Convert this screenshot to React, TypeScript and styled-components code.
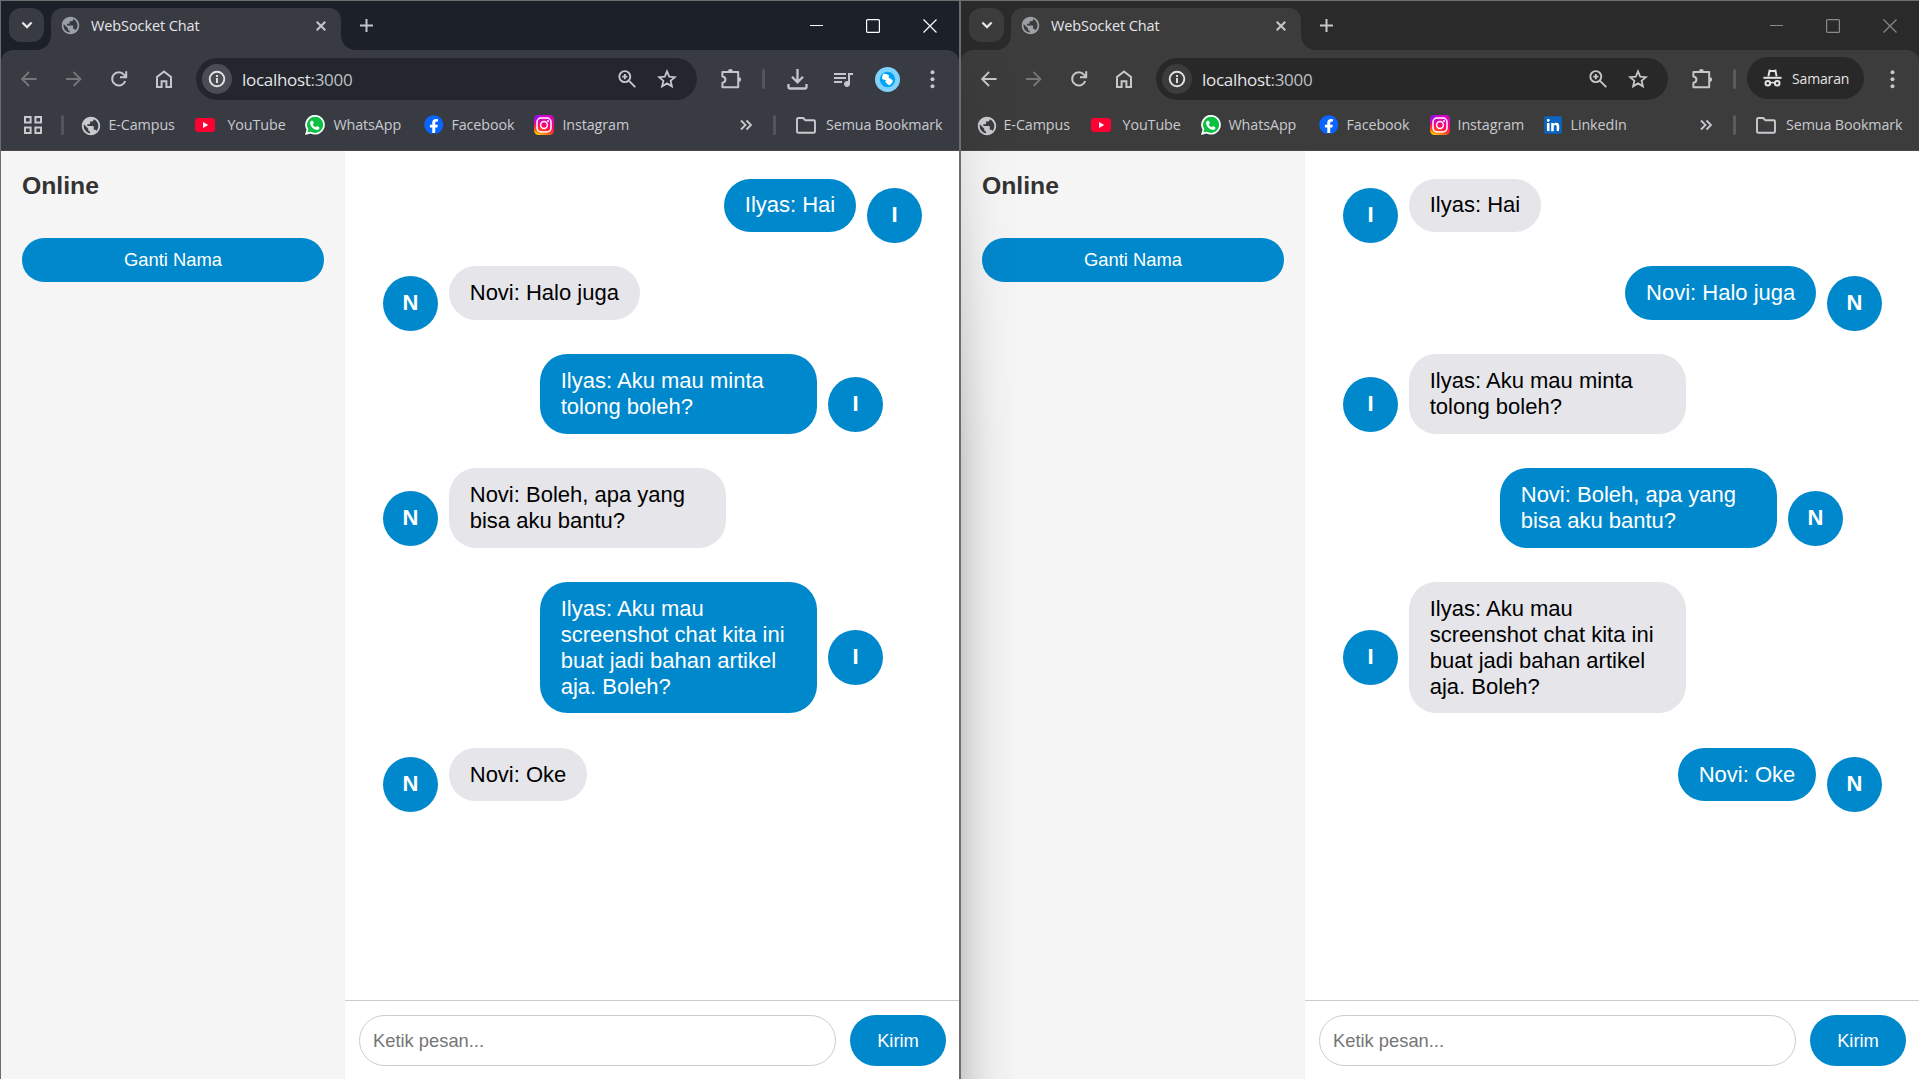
import React from "react";
import styled, { createGlobalStyle, ThemeProvider } from "styled-components";
import { FaFacebook, FaLinkedin } from "react-icons/fa";
import { MdPublic, MdQueueMusic } from "react-icons/md";

const UI = `"Open Sans", "Noto Sans", sans-serif`;
const PAGE = `"Liberation Sans", Arial, sans-serif`;

const normal = {
  strip: "#1c2028",
  bar: "#393b43",
  omni: "#23262d",
  chip: "#4b4d55",
  pill: "#23262d",
  icon: "#c5c6cd",
  dim: "#76777d",
  sep: "#53555e",
  caption: "#ffffff",
  line: "#4a4549",
};
const incognito = {
  strip: "#2a2a2a",
  bar: "#3c3c3c",
  omni: "#282828",
  chip: "#3c3c3c",
  pill: "#282828",
  icon: "#c7c7c7",
  dim: "#777777",
  sep: "#5c5c5c",
  caption: "#8a8a8a",
  line: "#484848",
};
type Chrome = typeof normal;

const Global = createGlobalStyle`
  * { box-sizing: border-box; }
  html, body { margin: 0; background: #fff; overflow: hidden; }
  svg { display: block; flex: none; }
`;

const Desktop = styled.div`
  display: grid;
  grid-template-columns: 960px 959px;
  height: 1079px;
  overflow: hidden;
`;

const Window = styled.div<{ $c: Chrome; $right?: boolean }>`
  position: relative;
  display: flex;
  flex-direction: column;
  min-width: 0;
  height: 1079px;
  border-top: 1px solid #6d6f6e;
  border-left: 1px solid #6d6d6d;
  border-right: ${(p) => (p.$right ? "1px solid #6d6d6d" : "none")};
  background: ${(p) => p.$c.strip};
  color: ${(p) => p.$c.icon};
  font-family: ${UI};
`;

/* Soft shadow cast by the focused window on its neighbour */
const CastShadow = styled.div`
  position: absolute;
  inset: 0 auto 0 0;
  width: 64px;
  pointer-events: none;
  background: linear-gradient(
    to right,
    rgba(0, 0, 0, 0.17),
    rgba(0, 0, 0, 0.1) 12px,
    rgba(0, 0, 0, 0.05) 24px,
    rgba(0, 0, 0, 0.018) 38px,
    transparent 60px
  );
  mask-image: linear-gradient(to bottom, transparent, rgba(0, 0, 0, 0.35) 150px, #000 460px);
`;

const TabStrip = styled.div`
  display: flex;
  flex: none;
  height: 49px;
  padding: 7px 0 0 8px;
`;

const TabSearch = styled.div`
  display: grid;
  place-items: center;
  width: 35px;
  height: 34px;
  border-radius: 12px;
  background: ${(p) => (p.theme as Chrome).bar};
  color: #e6e6ea;
`;

const Tab = styled.div`
  position: relative;
  display: flex;
  align-items: center;
  width: 290px;
  height: 42px;
  margin-left: 7px;
  padding: 0 15px 7px 9px;
  border-radius: 12px 12px 0 0;
  background: ${(p) => (p.theme as Chrome).bar};
  &::before,
  &::after {
    content: "";
    position: absolute;
    bottom: 0;
    width: 14px;
    height: 14px;
  }
  &::before {
    left: -14px;
    background: radial-gradient(circle at 0 0, transparent 13.5px, ${(p) => (p.theme as Chrome).bar} 14px);
  }
  &::after {
    right: -14px;
    background: radial-gradient(circle at 100% 0, transparent 13.5px, ${(p) => (p.theme as Chrome).bar} 14px);
  }
`;

const TabTitle = styled.span`
  flex: 1;
  margin-left: 10px;
  color: #e5e6ea;
  font-size: 14.5px;
  line-height: 20px;
  letter-spacing: -0.1px;
`;

const NewTab = styled.div`
  display: grid;
  place-items: center;
  width: 35px;
  height: 34px;
  margin-left: 8px;
`;

const Captions = styled.div`
  display: flex;
  margin-left: auto;
  margin-top: -7px;
  color: ${(p) => (p.theme as Chrome).caption};
`;

const CaptionButton = styled.div<{ $w: number }>`
  display: grid;
  place-items: center;
  width: ${(p) => p.$w}px;
  height: 49px;
`;

const Bars = styled.div`
  flex: none;
  height: 101px;
  border-radius: 12px 12px 0 0;
  background: ${(p) => (p.theme as Chrome).bar};
  border-bottom: 1px solid ${(p) => (p.theme as Chrome).line};
`;

const Toolbar = styled.div`
  display: flex;
  align-items: center;
  height: 58px;
  padding: 0 4px 0 5px;
`;

const Slot = styled.div<{ $dim?: boolean }>`
  display: grid;
  place-items: center;
  flex: none;
  width: 45px;
  height: 42px;
  color: ${(p) => (p.$dim ? (p.theme as Chrome).dim : "inherit")};
`;

const Omnibox = styled.div`
  display: flex;
  flex: 1;
  align-items: center;
  height: 42px;
  margin: 0 11.5px 0 10px;
  padding: 0 9.7px 0 6px;
  border-radius: 21px;
  background: ${(p) => (p.theme as Chrome).omni};
`;

const SiteChip = styled.div`
  display: grid;
  place-items: center;
  width: 30px;
  height: 30px;
  border-radius: 50%;
  background: ${(p) => (p.theme as Chrome).chip};
  color: #e3e3e6;
`;

const Url = styled.span`
  flex: 1;
  margin-left: 10px;
  padding-top: 1px;
  color: #e4e5e9;
  font-size: 17px;
  line-height: 24px;
  letter-spacing: -0.3px;
`;

const Port = styled.span`
  color: #bfc0c6;
`;

const OmniIcon = styled.div`
  display: grid;
  place-items: center;
  width: 40px;
  height: 40px;
`;

const Divider = styled.div<{ $m: string }>`
  flex: none;
  width: 3px;
  height: 20px;
  border-radius: 2px;
  margin: ${(p) => p.$m};
  background: ${(p) => (p.theme as Chrome).sep};
`;

const Profile = styled.div`
  display: grid;
  place-items: center;
  width: 25px;
  height: 25px;
  border-radius: 50%;
  background: #7fd4ff;
`;

const IncognitoPill = styled.div`
  display: flex;
  align-items: center;
  flex: none;
  width: 117px;
  height: 42px;
  margin: -2px 6px 0 1.5px;
  padding-left: 16px;
  gap: 10px;
  border-radius: 21px;
  background: ${(p) => (p.theme as Chrome).pill};
  color: #e3e3e3;
  font-size: 14px;
  letter-spacing: -0.15px;
`;

const BookmarkBar = styled.div<{ $start: number }>`
  display: flex;
  align-items: center;
  height: 34px;
  padding-left: ${(p) => p.$start}px;
  font-size: 14.3px;
  line-height: 20px;
  color: #c9cacf;
`;

const Bookmark = styled.div<{ $w: number; $gap?: number }>`
  display: flex;
  align-items: center;
  flex: none;
  width: ${(p) => p.$w}px;
  gap: ${(p) => p.$gap ?? 8}px;
  white-space: nowrap;
  letter-spacing: -0.08px;
`;

const IconBox = styled.span`
  display: grid;
  place-items: center;
  flex: none;
  width: 20px;
  height: 20px;
`;

const Backed = styled(IconBox)<{ $color: string }>`
  color: ${(p) => p.$color};
  background: radial-gradient(circle, #fff 55%, transparent 56%);
`;

const BookmarkEnd = styled.div`
  display: flex;
  align-items: center;
  width: 219.4px;
  margin-left: auto;
  letter-spacing: -0.12px;
  white-space: nowrap;
`;

const FolderLabel = styled.span`
  margin-left: 10.4px;
`;

/* ---------- chat page ---------- */

const Page = styled.div`
  display: flex;
  flex: 1;
  min-height: 0;
  background: #fff;
  font-family: ${PAGE};
`;

const Sidebar = styled.aside`
  flex: none;
  width: 344px;
  padding: 21px 21px;
  background: #f5f5f5;
`;

const Heading = styled.h3`
  margin: 0 0 38px;
  color: #333;
  font-size: 24.75px;
  font-weight: 700;
  line-height: 28px;
`;

const RenameButton = styled.button`
  display: block;
  width: 302px;
  height: 44px;
  padding: 0;
  border: 0;
  border-radius: 22px;
  background: #0088cc;
  color: #fff;
  font: 18.333px ${PAGE};
`;

const Chat = styled.main`
  display: flex;
  flex-direction: column;
  flex: 1;
  min-width: 0;
`;

const Messages = styled.div`
  display: flex;
  flex: 1;
  flex-direction: column;
  gap: 14.1px;
  padding: 27.55px 37px 0 38px;
`;

const Row = styled.div<{ $own: boolean }>`
  display: flex;
  align-items: center;
  flex: none;
  gap: 11px;
  max-width: 382px;
  align-self: ${(p) => (p.$own ? "flex-end" : "flex-start")};
`;

/* The percentage keeps the cap out of the row's intrinsic width */
const Bubble = styled.div<{ $own: boolean }>`
  max-width: min(277px, 100%);
  margin-bottom: 20.4px;
  padding: 13.7px 20.75px;
  border-radius: 27.5px;
  background: ${(p) => (p.$own ? "#0088cc" : "#e5e5ea")};
  color: ${(p) => (p.$own ? "#fff" : "#000")};
  font-size: 22px;
  line-height: 26px;
`;

const Avatar = styled.div`
  display: grid;
  place-items: center;
  flex: none;
  width: 55px;
  height: 55px;
  padding-bottom: 0.8px;
  border-radius: 50%;
  background: #0088cc;
  color: #fff;
  font-size: 22px;
  font-weight: 700;
`;

const Composer = styled.div`
  display: flex;
  flex: none;
  gap: 14px;
  height: 79px;
  padding: 14px 13px 13px 14px;
  border-top: 1px solid #ccc;
`;

const MessageInput = styled.input`
  flex: 1;
  min-width: 0;
  height: 51px;
  padding: 0 13px;
  border: 1px solid #ccc;
  border-radius: 27px;
  background: #fff;
  font: 18.333px ${PAGE};
  &::placeholder {
    color: #757575;
    opacity: 1;
  }
`;

const SendButton = styled.button`
  width: 96px;
  height: 51px;
  padding: 0;
  border: 0;
  border-radius: 27px;
  background: #0088cc;
  color: #fff;
  font: 18.333px ${PAGE};
`;

/* ---------- icons ---------- */

type StrokeProps = { size: number; w?: number; children: React.ReactNode };
const Stroke = ({ size, w = 2, children }: StrokeProps) => (
  <svg width={size} height={size} viewBox={`0 0 ${size} ${size}`} fill="none" stroke="currentColor" strokeWidth={w}>
    {children}
  </svg>
);

const BackIcon = () => (
  <Stroke size={16} w={1.8}><path d="M15.6 8H1.2M8.1 1l-7 7 7 7" /></Stroke>
);
const ForwardIcon = () => (
  <Stroke size={16} w={1.8}><path d="M0 8h14.4M7.5 1l7 7-7 7" /></Stroke>
);
const ReloadIcon = () => (
  <Stroke size={18} w={2}><path d="M15.2 11A6.7 6.7 0 1 1 14 4.6L16 6.6M16.2 1.2v6H10" /></Stroke>
);
const HomeIcon = () => (
  <Stroke size={18} w={2}><path d="M2 17V6.9L9 1.4l7 5.5V17h-4.6v-5.8H6.6V17z" /></Stroke>
);
const InfoIcon = () => (
  <Stroke size={18} w={1.9}><circle cx="9" cy="9" r="7.3" /><path d="M9 8v5M9 4.9v2" /></Stroke>
);
const ZoomIcon = () => (
  <Stroke size={20} w={1.9}><circle cx="7.8" cy="7.6" r="5.5" /><path d="m11.8 11.6 6.5 6.5M7.8 5v5.2M5.2 7.6h5.2" /></Stroke>
);
const StarIcon = () => (
  <Stroke size={20} w={1.8}><path d="m10 2.4 2.2 5.2 5.7.5-4.3 3.7 1.3 5.5-4.9-2.9-4.9 2.9 1.3-5.5L2.1 8.1l5.7-.5z" /></Stroke>
);
const PuzzleIcon = () => (
  <svg width="22" height="22" viewBox="0 0 22 22" fill="none" stroke="currentColor" strokeWidth="2" strokeLinejoin="round">
    <path d="M2.4 4h15.8v15.2H2.4v-4.4c4-.4 4-6 0-6.4z" />
    <path d="M8 3.4a2.4 2.4 0 0 1 4.8 0zM18.8 9.2a2.4 2.4 0 0 1 0 4.8z" fill="currentColor" strokeWidth="0" />
  </svg>
);
const DownloadIcon = () => (
  <Stroke size={21} w={2.3}><path d="M10.5 0v13M5 7.8l5.5 5.5L16 7.8M1.5 15v3.2q0 1.3 1.3 1.3h15.4q1.3 0 1.3-1.3V15" /></Stroke>
);
const MenuIcon = () => (
  <svg width="5" height="19" viewBox="0 0 5 19" fill="currentColor">
    <circle cx="2.5" cy="2.3" r="2" /><circle cx="2.5" cy="9.3" r="2" /><circle cx="2.5" cy="16.3" r="2" />
  </svg>
);
const ProfileGlyph = () => (
  <svg width="17" height="17" viewBox="0 0 17 17">
    <circle cx="8.5" cy="8.5" r="7.7" fill="#00a3f5" />
    <rect x="3.3" y="3" width="6.4" height="6" rx="1.6" transform="rotate(12 6.5 6)" fill="#fff" />
    <rect x="7" y="7.3" width="6.2" height="6.2" rx="1.6" transform="rotate(40 10 10.4)" fill="#fff" />
  </svg>
);
const IncognitoIcon = () => (
  <svg width="19" height="18" viewBox="0 0 19 18" fill="none" stroke="currentColor" strokeWidth="2">
    <path d="M5.4 7.4 6.6 1.6q2.9 1 5.8 0l1.2 5.8" />
    <path d="M.4 8.8h18.2" />
    <circle cx="4.8" cy="14.3" r="2.3" /><circle cx="14.2" cy="14.3" r="2.3" />
    <path d="M7 14q2.5-1 5 0" strokeWidth="1.6" />
  </svg>
);
const ChevronDown = () => (
  <Stroke size={12} w={2.2}><path d="m1.4 3.5 4.6 4.6 4.6-4.6" /></Stroke>
);
const AppsIcon = () => (
  <Stroke size={18} w={2}><path d="M1 1h5.6v5.6H1zM11.4 1H17v5.6h-5.6zM1 11.4h5.6V17H1zM11.4 11.4H17V17h-5.6z" /></Stroke>
);
const MoreIcon = () => (
  <Stroke size={12} w={1.8}><path d="m1 1.5 4.5 4.5L1 10.5M6.5 1.5 11 6l-4.500 4.500" /></Stroke>
);
const FolderIcon = () => (
  <svg width="20" height="17" viewBox="0 0 20 17" fill="none" stroke="currentColor" strokeWidth="1.9" strokeLinejoin="round">
    <path d="M1 14.4V2.4Q1 1 2.4 1h4.8l2 2.2h8.4q1.4 0 1.4 1.4v9.8q0 1.4-1.4 1.4H2.4Q1 15.8 1 14.4z" />
  </svg>
);
const YouTubeIcon = () => (
  <svg width="20" height="14" viewBox="0 0 20 14">
    <rect width="20" height="14" rx="3.2" fill="#ff0033" />
    <path d="M8 4.1v5.8L13.2 7z" fill="#fff" />
  </svg>
);
const WhatsAppIcon = () => (
  <svg width="20" height="20" viewBox="0 0 20 20">
    <path d="M10.2 0a9.8 9.8 0 1 1-4.7 18.5L0 20l1.5-5.3A9.8 9.8 0 0 1 10.2 0z" fill="#fff" />
    <path d="M10.2 1.7a8.1 8.1 0 1 1-4.4 15L2.4 17.6l1-3.3a8.1 8.1 0 0 1 6.8-12.6z" fill="#0cc042" />
    <path transform="translate(4.6 4.3) scale(.46)" d="M6.62 10.79c1.44 2.83 3.76 5.14 6.59 6.59l2.2-2.2c.27-.27.67-.36 1.02-.24l4.57 1.57V20c0 .55-1 3-4 3C8 23 1 14 1 8c0-4 3-5 4-5h1.5c.55 0 1 .45 1 1l1.57 3.57c.11.35.03.74-.25 1.02z" fill="#fff" />
  </svg>
);
const InstagramIcon = () => (
  <svg width="20" height="20" viewBox="0 0 20 20">
    <defs>
      <linearGradient id="ig-base" x1="0.6" y1="0" x2="0.3" y2="1">
        <stop offset="0" stopColor="#d800d0" /><stop offset=".5" stopColor="#ff0073" />
        <stop offset=".8" stopColor="#ff4b1f" /><stop offset="1" stopColor="#ffc800" />
      </linearGradient>
      <radialGradient id="ig-corner" cx="0" cy="0" r=".6">
        <stop offset="0" stopColor="#6a1bff" /><stop offset="1" stopColor="#b400ff" stopOpacity="0" />
      </radialGradient>
    </defs>
    <rect width="20" height="20" rx="4.5" fill="url(#ig-base)" />
    <rect width="20" height="20" rx="4.5" fill="url(#ig-corner)" />
    <rect x="3" y="3" width="14" height="14" rx="4.2" fill="none" stroke="#fff" strokeWidth="1.5" />
    <circle cx="10" cy="10" r="3.4" fill="none" stroke="#fff" strokeWidth="1.5" />
    <circle cx="14" cy="6" r="1" fill="#fff" />
  </svg>
);

/* ---------- composition ---------- */

type Person = "Ilyas" | "Novi";
const conversation: { from: Person; text: string }[] = [
  { from: "Ilyas", text: "Hai" },
  { from: "Novi", text: "Halo juga" },
  { from: "Ilyas", text: "Aku mau minta tolong boleh?" },
  { from: "Novi", text: "Boleh, apa yang bisa aku bantu?" },
  { from: "Ilyas", text: "Aku mau screenshot chat kita ini buat jadi bahan artikel aja. Boleh?" },
  { from: "Novi", text: "Oke" },
];

const ChatPage = ({ me }: { me: Person }) => (
  <Page>
    <Sidebar>
      <Heading>Online</Heading>
      <RenameButton>Ganti Nama</RenameButton>
    </Sidebar>
    <Chat>
      <Messages>
        {conversation.map((m) => {
          const own = m.from === me;
          const avatar = <Avatar>{m.from[0]}</Avatar>;
          return (
            <Row key={m.text} $own={own}>
              {!own && avatar}
              <Bubble $own={own}>{`${m.from}: ${m.text}`}</Bubble>
              {own && avatar}
            </Row>
          );
        })}
      </Messages>
      <Composer>
        <MessageInput placeholder="Ketik pesan..." />
        <SendButton>Kirim</SendButton>
      </Composer>
    </Chat>
  </Page>
);

const BrowserWindow = ({ me, secret = false }: { me: Person; secret?: boolean }) => {
  const c = secret ? incognito : normal;
  return (
    <ThemeProvider theme={c}>
      <Window $c={c} $right={!secret}>
        <TabStrip>
          <TabSearch><ChevronDown /></TabSearch>
          <Tab>
            <MdPublic size={21} color="#9aa0a6" />
            <TabTitle>WebSocket Chat</TabTitle>
            <Stroke size={10} w={2}><path d="m.7.7 8.6 8.6M9.3.7.7 9.3" /></Stroke>
          </Tab>
          <NewTab><Stroke size={13} w={2}><path d="M6.5 0v13M0 6.5h13" /></Stroke></NewTab>
          <Captions>
            <CaptionButton $w={57}><Stroke size={13} w={1}><path d="M0 6.5h13" /></Stroke></CaptionButton>
            <CaptionButton $w={56.5}><Stroke size={14} w={1.2}><rect x=".6" y=".6" width="12.8" height="12.8" rx="1" /></Stroke></CaptionButton>
            <CaptionButton $w={57.5}><Stroke size={14} w={1.2}><path d="m.5.5 13 13M13.5.5l-13 13" /></Stroke></CaptionButton>
          </Captions>
        </TabStrip>
        <Bars>
          <Toolbar>
            <Slot $dim={!secret}><BackIcon /></Slot>
            <Slot $dim><ForwardIcon /></Slot>
            <Slot><ReloadIcon /></Slot>
            <Slot><HomeIcon /></Slot>
            <Omnibox>
              <SiteChip><InfoIcon /></SiteChip>
              <Url>localhost<Port>:3000</Port></Url>
              <OmniIcon><ZoomIcon /></OmniIcon>
              <OmniIcon><StarIcon /></OmniIcon>
            </Omnibox>
            <Slot><PuzzleIcon /></Slot>
            <Divider $m={secret ? "0 9.5px 0 8.5px" : "0 10px 0 8.7px"} />
            {secret ? (
              <IncognitoPill><IncognitoIcon />Samaran</IncognitoPill>
            ) : (
              <>
                <Slot><DownloadIcon /></Slot>
                <Slot><MdQueueMusic size={24} /></Slot>
                <Slot><Profile><ProfileGlyph /></Profile></Slot>
              </>
            )}
            <Slot><MenuIcon /></Slot>
          </Toolbar>
          <BookmarkBar $start={secret ? 14.5 : 23}>
            {!secret && (
              <>
                <AppsIcon />
                <Divider $m="0 16.4px 0 19px" />
              </>
            )}
            <Bookmark $w={115}><IconBox><MdPublic size={22} /></IconBox>E-Campus</Bookmark>
            <Bookmark $w={110} $gap={12}><YouTubeIcon />YouTube</Bookmark>
            <Bookmark $w={118}><WhatsAppIcon />WhatsApp</Bookmark>
            <Bookmark $w={111}>
              <Backed $color="#0866ff"><FaFacebook size={19.5} /></Backed>Facebook
            </Bookmark>
            <Bookmark $w={113}><InstagramIcon />Instagram</Bookmark>
            {secret && (
              <Bookmark $w={90}><Backed $color="#0a66c2"><FaLinkedin size={20} /></Backed>LinkedIn</Bookmark>
            )}
            <BookmarkEnd>
              <MoreIcon />
              <Divider $m="0 20px 0 21px" />
              <FolderIcon />
              <FolderLabel>Semua Bookmark</FolderLabel>
            </BookmarkEnd>
          </BookmarkBar>
        </Bars>
        <ChatPage me={me} />
        {secret && <CastShadow />}
      </Window>
    </ThemeProvider>
  );
};

export default function App() {
  return (
    <>
      <Global />
      <Desktop>
        <BrowserWindow me="Ilyas" />
        <BrowserWindow me="Novi" secret />
      </Desktop>
    </>
  );
}
